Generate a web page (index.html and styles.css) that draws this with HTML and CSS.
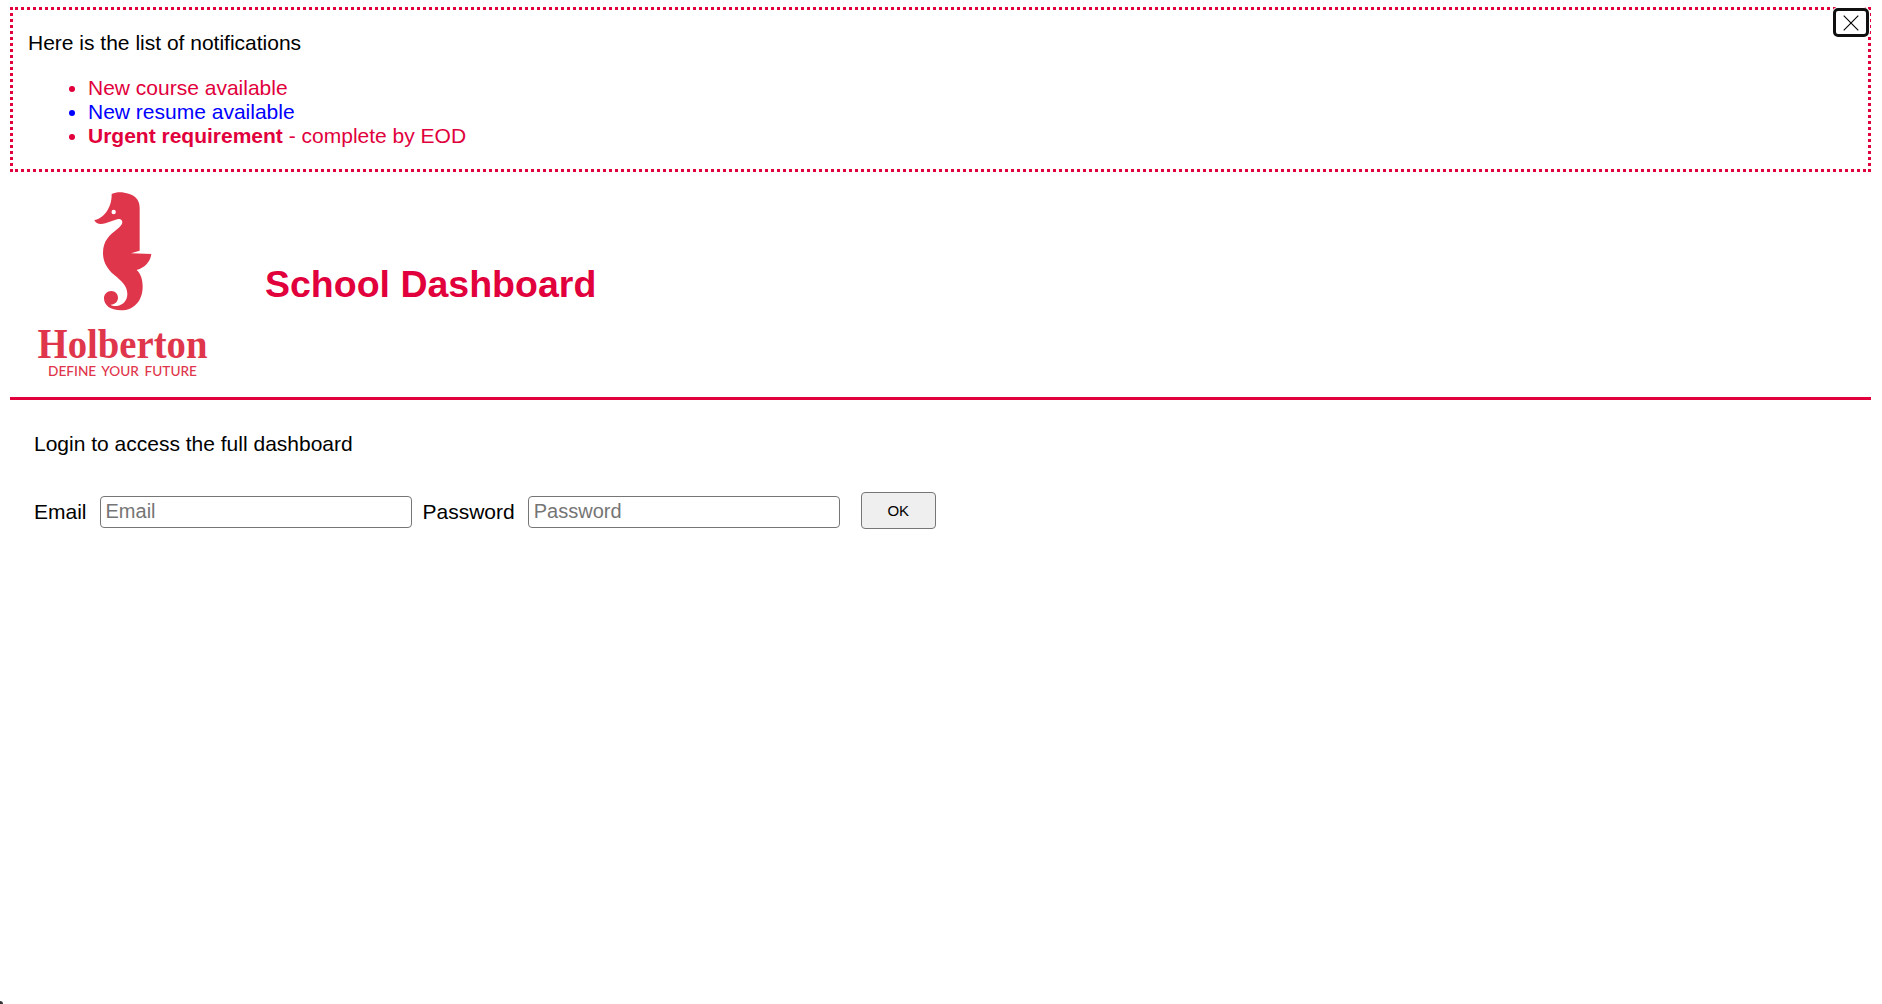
FILE: index.html
```html
<!DOCTYPE html>
<html lang="en">
<head>
<meta charset="utf-8">
<title>School Dashboard</title>
<link rel="stylesheet" href="styles.css">
</head>
<body>
<section class="notifications">
  <p class="notifications-title">Here is the list of notifications</p>
  <button class="close" aria-label="Close"><svg width="16" height="16" viewBox="0 0 16 16"><path d="M.7.7 15.3 15.3M15.3.7.7 15.3"/></svg></button>
  <ul class="notification-list">
    <li>New course available</li>
    <li class="info">New resume available</li>
    <li><strong>Urgent requirement</strong> - complete by EOD</li>
  </ul>
</section>
<header class="header">
  <svg class="logo" viewBox="0 0 225 225" role="img" aria-label="Holberton">
    <g transform="translate(70 8) scale(.33333)">
      <path d="M95 42C106 37 119 36 133 38C162 42 179 57 179 83V212L153 220L214 222C211 245 195 263 170 270C183 281 188 300 188 320C188 362 162 391 123 391C91 391 72 376 72 355C72 343 81 333 94 333C106 333 114 342 114 353C114 364 106 372 92 374C97 378 104 379 111 378C130 375 142 361 142 342C142 316 123 302 103 285C83 268 69 248 69 219C69 181 88 166 113 146C124 137 129 130 126 122C123 117 116 116 107 119L76 130C61 135 47 132 43 120C69 117 96 85 95 42Z"/>
      <circle class="eye" cx="101" cy="96" r="6.5"/>
    </g>
    <text class="wordmark" x="27.500" y="185.500" textLength="170" lengthAdjust="spacingAndGlyphs">Holberton</text>
    <text class="tagline" x="38" y="203.700" textLength="149" lengthAdjust="spacingAndGlyphs">DEFINE YOUR FUTURE</text>
  </svg>
  <h1>School Dashboard</h1>
</header>
<main class="login">
  <p class="login-text">Login to access the full dashboard</p>
  <form class="login-form">
    <label for="email">Email</label>
    <input id="email" type="email" placeholder="Email">
    <label for="password">Password</label>
    <input id="password" type="password" placeholder="Password">
    <button class="submit" type="button">OK</button>
  </form>
</main>
<div class="corner"></div>
</body>
</html>
```
FILE: styles.css
```css
* { box-sizing: border-box; }
body {
  margin: 7px 11px 0 10px;
  background: #fff;
  color: #000;
  font: 21px/24px "Liberation Sans", Arial, sans-serif;
}
.notifications {
  position: relative;
  height: 165px;
  padding: 21px 15px 0;
  border: 3px dotted #e1003c;
}
.notifications-title { margin: 0 0 21px; }
.notification-list { margin: 0; padding-left: 60px; color: #e1003c; }
.notification-list .info { color: #00f; }
.close {
  position: absolute;
  top: -2px;
  right: -1px;
  display: flex;
  align-items: center;
  justify-content: center;
  width: 36px;
  height: 29px;
  padding: 0;
  border: 3px solid #101010;
  border-radius: 5px;
  background: #fff;
  box-shadow: 0 0 0 1px #fff;
}
.close path { fill: none; stroke: #000; stroke-width: 1.1; }
.header {
  display: flex;
  align-items: center;
  gap: 30px;
  height: 228px;
  border-bottom: 3px solid #e1003c;
}
.logo { width: 225px; height: 225px; fill: #e0364c; }
.logo .eye { fill: #fff; }
.wordmark { font: bold 43px "Liberation Serif", serif; }
.tagline { font: 500 13px Lato, sans-serif; word-spacing: 2px; }
h1 { margin: 0 0 2px; color: #e1003c; font-size: 37.5px; line-height: 44px; }
.login { padding: 32px 24px 0; }
.login-text { margin: 0; }
.login-form { display: flex; align-items: center; margin-top: 36px; }
.login-form label { padding-top: 3px; }
.login-form input {
  width: 312px;
  height: 32px;
  margin: 3px 11px 0 13px;
  padding: 0 5px 2px;
  border: 1px solid #767676;
  border-radius: 4px;
  background: #fff;
  font: 20px "Liberation Sans", Arial, sans-serif;
}
.login-form input::placeholder { color: #757575; }
.submit {
  width: 75px;
  height: 37px;
  margin-left: 10px;
  padding: 0 0 1px;
  border: 1px solid #767676;
  border-radius: 4px;
  background: #efefef;
  color: #000;
  font: 15px "Liberation Sans", Arial, sans-serif;
}
.corner {
  position: fixed;
  bottom: 0;
  left: 0;
  width: 3px;
  height: 3px;
  border-top-right-radius: 3px;
  background: #333;
}
```
